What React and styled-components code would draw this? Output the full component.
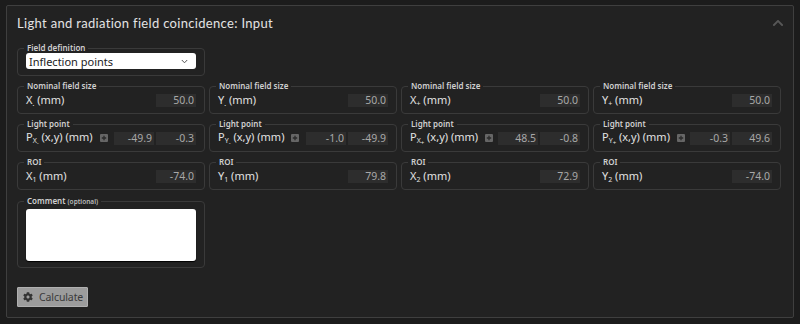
import styled, { createGlobalStyle } from "styled-components";
import { FaCog, FaChevronUp } from "react-icons/fa";

const GlobalStyle = createGlobalStyle`
    html, body {
        margin: 0;
        background: #1c1c1c;
    }
    body {
        font-family: "Noto Sans", "DejaVu Sans", sans-serif;
    }
`;

const Page = styled.div`
    width: 800px;
    height: 324px;
    padding: 5px 6px 0 6px;
    box-sizing: border-box;
`;

const Panel = styled.section`
    height: 313px;
    box-sizing: border-box;
    background: #222222;
    border: 1px solid #3f3f3f;
    border-radius: 2px;
    padding: 7px 13px 10px 10px;
    display: flex;
    flex-direction: column;
`;

const Header = styled.div`
    display: flex;
    justify-content: space-between;
    align-items: center;
    height: 20px;
    margin: 0 -4px 11px 0;
`;

const Title = styled.h2`
    margin: 0;
    font-family: "Lato", sans-serif;
    font-weight: 400;
    font-size: 13px;
    letter-spacing: 0.32px;
    color: #e4e4e4;
`;

const Collapse = styled.span`
    color: #575757;
    font-size: 12px;
    display: flex;
`;

const Grid = styled.div`
    display: grid;
    grid-template-columns: repeat(4, 188px);
    column-gap: 4px;
    row-gap: 5px;
`;

const Box = styled.fieldset`
    margin: 0;
    padding: 0 8px 4px 8px;
    border: 1px solid #3a3a3a;
    border-radius: 4px;
    min-width: 0;
    grid-column: ${(p) => p.$col || "auto"};
`;

const Legend = styled.legend`
    font-size: 8px;
    line-height: 10px;
    font-weight: 600;
    color: #d0d0d0;
    padding: 0 3px;
    margin-left: -2px;
`;

const Small = styled.span`
    font-size: 6.5px;
    font-weight: 600;
    color: #bbb;
`;

const Row = styled.div`
    display: flex;
    align-items: center;
    height: 18px;
    gap: 2px;
`;

const Label = styled.span`
    flex: 1;
    font-size: 11px;
    color: #e2e2e2;
    white-space: nowrap;
    display: flex;
    align-items: center;
    gap: 7px;
`;

const Value = styled.span`
    width: 40px;
    height: 13px;
    background: #2d2d2d;
    color: #a8a8a8;
    font-size: 10.5px;
    line-height: 13px;
    text-align: right;
    padding-right: 2px;
    box-sizing: border-box;
`;

const Plus = styled.svg`
    width: 8px;
    height: 8px;
    flex-shrink: 0;
`;

const Select = styled.div`
    height: 16px;
    margin: 0 0 2px 0;
    background: #fff;
    border-radius: 3px;
    display: flex;
    align-items: center;
    justify-content: space-between;
    padding: 0 8px 0 3px;
    font-size: 11px;
    color: #222;
`;

const Caret = styled.svg`
    width: 7px;
    height: 5px;
`;

const TextArea = styled.div`
    height: 52px;
    background: #fff;
    border-radius: 3px;
    box-shadow: 0 1px 1px #000;
    margin: 2px 0 2px 0;
`;

const Button = styled.button`
    align-self: flex-start;
    margin-top: 19px;
    height: 20px;
    display: flex;
    align-items: center;
    gap: 6px;
    padding: 0 4px 0 5px;
    background: #9c9c9c;
    border: 1px solid #b0b0b0;
    border-radius: 1px;
    color: #3a3a3a;
    font-family: "Noto Sans", sans-serif;
    font-size: 10.5px;
    letter-spacing: -0.1px;

    svg {
        flex-shrink: 0;
    }
`;

const sub = { fontSize: "7px", verticalAlign: "-2px" };
const subsub = { fontSize: "6px", verticalAlign: "-2px" };

const nominal = [
    ["X", "-", "50.0"],
    ["Y", "-", "50.0"],
    ["X", "+", "50.0"],
    ["Y", "+", "50.0"],
];

const lightPoints = [
    ["X", "-", "-49.9", "-0.3"],
    ["Y", "-", "-1.0", "-49.9"],
    ["X", "+", "48.5", "-0.8"],
    ["Y", "+", "-0.3", "49.6"],
];

const roi = [
    ["X", "1", "-74.0"],
    ["Y", "1", "79.8"],
    ["X", "2", "72.9"],
    ["Y", "2", "-74.0"],
];

function PlusIcon() {
    return (
        <Plus viewBox="0 0 8 8">
            <rect x="0" y="0" width="8" height="8" rx="1" fill="#666" />
            <path d="M4 1.8 V6.2 M1.8 4 H6.2" stroke="#2a2a2a" strokeWidth="1.3" />
        </Plus>
    );
}

function App() {
    return (
        <Page>
            <GlobalStyle />
            <Panel>
                <Header>
                    <Title>Light and radiation field coincidence: Input</Title>
                    <Collapse>
                        <FaChevronUp />
                    </Collapse>
                </Header>
                <Grid>
                    <Box $col="1">
                        <Legend>Field definition</Legend>
                        <Select>
                            Inflection points
                            <Caret viewBox="0 0 7 5">
                                <path d="M0.8 1 L3.5 3.8 L6.2 1" stroke="#555" strokeWidth="1" fill="none" />
                            </Caret>
                        </Select>
                    </Box>
                    <div style={{ gridColumn: "2 / 5" }} />
                    {nominal.map(([a, s, v], i) => (
                        <Box key={"n" + i}>
                            <Legend>Nominal field size</Legend>
                            <Row>
                                <Label>
                                    <span>
                                        {a}
                                        <span style={sub}>{s === "-" ? "." : "+"}</span> (mm)
                                    </span>
                                </Label>
                                <Value>{v}</Value>
                            </Row>
                        </Box>
                    ))}
                    {lightPoints.map(([a, s, x, y], i) => (
                        <Box key={"l" + i}>
                            <Legend>Light point</Legend>
                            <Row>
                                <Label>
                                    <span>
                                        P<span style={sub}>{a}<span style={subsub}>{s}</span></span> (x,y) (mm)
                                    </span>
                                    <PlusIcon />
                                </Label>
                                <Value>{x}</Value>
                                <Value>{y}</Value>
                            </Row>
                        </Box>
                    ))}
                    {roi.map(([a, s, v], i) => (
                        <Box key={"r" + i}>
                            <Legend>ROI</Legend>
                            <Row>
                                <Label>
                                    <span>
                                        {a}
                                        <span style={sub}>{s}</span> (mm)
                                    </span>
                                </Label>
                                <Value>{v}</Value>
                            </Row>
                        </Box>
                    ))}
                    <Box $col="1" style={{ marginTop: "1px" }}>
                        <Legend>
                            Comment <Small>(optional)</Small>
                        </Legend>
                        <TextArea />
                    </Box>
                </Grid>
                <Button>
                    <FaCog size={10} color="#333" />
                    Calculate
                </Button>
            </Panel>
        </Page>
    );
}

export default App;
